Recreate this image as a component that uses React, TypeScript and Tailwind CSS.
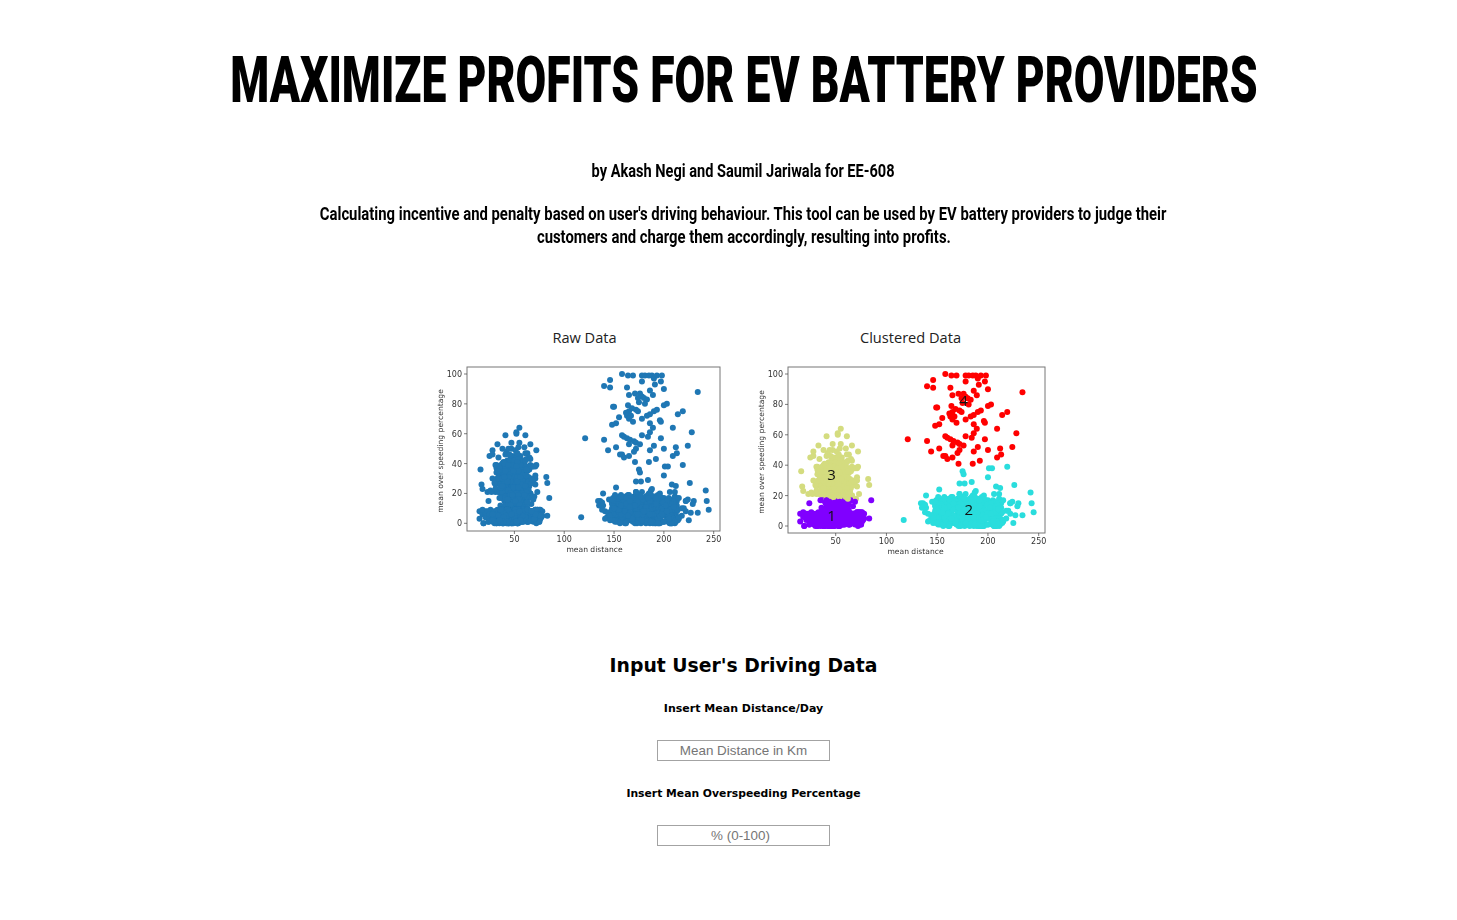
type Point = [number, number];

// loose points read off the plot, the dense blobs get generated below
const scattered: Point[] = [
  [158,100],[164,99],[169,99],[178,99],[181,99],[185,99],[188,99],[190,97],[193,99],[198,99],[197,95],[200,90],[191,93],[178,95],[163,91],[146,96],[140,92],[146,91],[234,88],
  [171,87],[176,87],[178,85],[174,84],[175,81],[180,84],[183,83],[186,89],[189,86],[165,86],[181,80],[203,80],[200,79],[164,79],[168,77],[172,76],[174,75],[150,78],[149,78],[214,73],[219,75],[165,75],[162,74],[163,72],[155,71],[167,72],[169,68],[165,70],[178,70],[183,72],[186,73],[190,75],[193,76],[197,68],[196,69],[186,67],[189,64],[186,61],[184,58],[178,59],[209,64],[228,61],[148,66],[152,67],[158,59],[160,58],[163,57],[166,56],[170,55],[172,54],[176,53],[165,53],[121,57],[140,56],[197,57],[224,52],[212,51],[200,50],[190,52],[186,49],[172,50],[170,48],[152,51],[144,49],[213,47],[209,45],[192,43],[185,41],[171,41],[158,46],[160,44],[156,46],[165,45],
  [201,38],[204,38],[219,39],[175,36],[176,34],[200,32],[177,28],[172,28],[184,29],[208,26],[212,25],[226,27],[242,22],[243,15],[245,9],[234,7],[227,7],[230,15],[229,13],[139,20],[117,4],[152,24],
  [55,64],[52,60],[52,61],[41,59],[61,59],[33,53],[47,54],[55,54],[66,53],[28,49],[38,50],[47,50],[54,51],[60,51],[72,49],[63,47],[25,45],[16,36],[82,31],[83,27],[85,17],[17,26],[18,23],[23,21],[26,22],[24,15],[15,8],[15,3],[83,5],
  [136,15],[139,12],[141,8],[143,4],[146,3],[134,15],[145,16],[222,15],[220,10],[218,5],[225,2],[215,3],
];

const makePoints = () => {
  let seed = 608;
  const rnd = () => {
    seed = (seed + 0x6d2b79f5) | 0;
    let t = Math.imul(seed ^ (seed >>> 15), 1 | seed);
    t = (t + Math.imul(t ^ (t >>> 7), 61 | t)) ^ t;
    return ((t ^ (t >>> 14)) >>> 0) / 4294967296;
  };
  const gauss = () => (rnd() + rnd() + rnd() + rnd() - 2) / 0.58;
  const pts: Point[] = [...scattered];
  // upper left blob
  for (let i = 0; i < 420; i++) {
    const y = Math.round(30 + gauss() * 8.5);
    if (y < 12 || y > 50) continue;
    pts.push([Math.round(50 + gauss() * 8.5), y]);
  }
  // neck between the two left clusters
  for (let i = 0; i < 60; i++) {
    pts.push([Math.round(50 + gauss() * 7), Math.round(10 + rnd() * 10)]);
  }
  // lower left strip
  for (let i = 0; i < 520; i++) {
    const y = Math.round(rnd() * 9);
    const x = Math.round(48 + gauss() * 16);
    if (x < 18 || x > 78) continue;
    pts.push([x, y]);
  }
  // lower right strip: solid middle plus looser ends
  for (let i = 0; i < 480; i++) {
    pts.push([Math.round(148 + rnd() * 65), Math.round(rnd() * (15 + rnd() * 8))]);
  }
  for (let i = 0; i < 90; i++) {
    const x = Math.round(178 + gauss() * 25);
    if (x < 135 || x > 228) continue;
    pts.push([x, Math.round(rnd() * 18)]);
  }
  return pts;
};

const points = makePoints();

const clusterColor = ([x, y]: Point) => {
  if (x < 100) return y >= 18 ? "#d4dc7f" : "#8000ff";
  return y >= 40 ? "#ff0000" : "#2adddd";
};

interface ChartProps {
  title: string;
  width: number;
  // frame and axis mapping, px inside the svg
  left: number;
  right: number;
  bottom: number;
  x50: number;
  xUnit: number;
  y0: number;
  yUnit: number;
  labelShift: number;
  colored?: boolean;
}

const Chart = ({ title, width, left, right, bottom, x50, xUnit, y0, yUnit, labelShift, colored }: ChartProps) => {
  const sx = (x: number) => x50 + (x - 50) * xUnit;
  const sy = (y: number) => y0 - y * yUnit;
  return (
    <div className="flex flex-col items-center" style={{ width }}>
      <h4 className="text-[14.6px] leading-[22px] text-[#222] font-['Open_Sans',sans-serif]">{title}</h4>
      <svg width={width} height={216} className="mt-[12px] overflow-visible blur-[0.3px]">
        <rect x={left} y={7} width={right - left} height={bottom - 7} fill="#fff" stroke="#777" strokeWidth="1" />
        {[50, 100, 150, 200, 250].map((t) => (
          <g key={t}>
            <line x1={sx(t)} x2={sx(t)} y1={bottom} y2={bottom + 3} stroke="#444" strokeWidth="0.7" />
            <text x={sx(t)} y={bottom + 11} fontSize="8" textAnchor="middle" fill="#333" fontFamily="'DejaVu Sans', sans-serif">{t}</text>
          </g>
        ))}
        {[0, 20, 40, 60, 80, 100].map((t) => (
          <g key={t}>
            <line x1={left - 3} x2={left} y1={sy(t)} y2={sy(t)} stroke="#444" strokeWidth="0.7" />
            <text x={left - 5} y={sy(t) + 3} fontSize="8" textAnchor="end" fill="#333" fontFamily="'DejaVu Sans', sans-serif">{t}</text>
          </g>
        ))}
        <text x={(left + right) / 2 + labelShift} y={bottom + 21} fontSize="7.6" textAnchor="middle" fill="#333" fontFamily="'DejaVu Sans', sans-serif">mean distance</text>
        <text transform={`translate(${left - 24} ${(7 + bottom) / 2 + 2}) rotate(-90)`} fontSize="7.6" textAnchor="middle" fill="#333" fontFamily="'DejaVu Sans', sans-serif">mean over speeding percentage</text>
        {points.map((p, i) => (
          <circle key={i} cx={sx(p[0])} cy={sy(p[1])} r="3" fill={colored ? clusterColor(p) : "#1f77b4"} />
        ))}
        {colored && (
          <g fontSize="15" textAnchor="middle" fill="#111" fontFamily="'Open Sans', sans-serif">
            <text x={sx(46)} y={sy(3)}>1</text>
            <text x={sx(181)} y={sy(7)}>2</text>
            <text x={sx(46)} y={sy(30)}>3</text>
            <text x={sx(176)} y={sy(79)}>4</text>
          </g>
        )}
      </svg>
    </div>
  );
};

const App = () => {
  return (
    <div className="min-h-[920px] bg-white pl-[30px] text-black font-['Roboto',sans-serif] text-center overflow-hidden">
      <h1 className="pt-[42px] h-[124px] flex justify-center overflow-hidden text-[65px] leading-[76px] font-black whitespace-nowrap">
        <span className="inline-block shrink-0 scale-x-[0.685]">MAXIMIZE PROFITS FOR EV BATTERY PROVIDERS</span>
      </h1>
      <h3 className="mt-[35px] text-[18px] leading-[24px] font-bold whitespace-nowrap">
        <span className="inline-block scale-x-[0.81]">by Akash Negi and Saumil Jariwala for EE-608</span>
      </h3>
      <p className="mt-[19px] text-[18px] leading-[23px] font-bold whitespace-nowrap">
        <span className="inline-block scale-x-[0.825]">Calculating incentive and penalty based on user's driving behaviour. This tool can be used by EV battery providers to judge their</span>
        <br />
        <span className="inline-block scale-x-[0.825]">customers and charge them accordingly, resulting into profits.</span>
      </p>

      <div className="mt-[78px] flex justify-center gap-[14px]">
        <Chart title="Raw Data" width={320} left={42} right={295} bottom={171} x50={89.4} xUnit={0.9965} y0={163.3} yUnit={1.493} labelShift={1} />
        <Chart title="Clustered Data" width={304} left={29} right={286} bottom={173} x50={76.7} xUnit={1.015} y0={166} yUnit={1.52} labelShift={-1} colored />
      </div>

      <div className="mt-[77px] flex flex-col items-center font-['DejaVu_Sans',sans-serif] font-bold">
        <h2 className="text-[18.8px] leading-[26px]">Input User's Driving Data</h2>
        <label className="mt-[23px] text-[11px] leading-[14px]">Insert Mean Distance/Day</label>
        <input
          placeholder="Mean Distance in Km"
          className="mt-[24px] w-[173px] h-[21px] border border-[#a3a3a3] text-center text-[13.4px] font-normal font-['Liberation_Sans',sans-serif] placeholder:text-[#757575] outline-none"
        />
        <label className="mt-[26px] text-[10.8px] leading-[14px]">Insert Mean Overspeeding Percentage</label>
        <input
          placeholder="% (0-100)"
          className="mt-[24px] w-[173px] h-[21px] border border-[#a3a3a3] pr-[6px] text-center text-[13.4px] font-normal font-['Liberation_Sans',sans-serif] placeholder:text-[#757575] outline-none"
        />
      </div>
    </div>
  );
};

export default App;
